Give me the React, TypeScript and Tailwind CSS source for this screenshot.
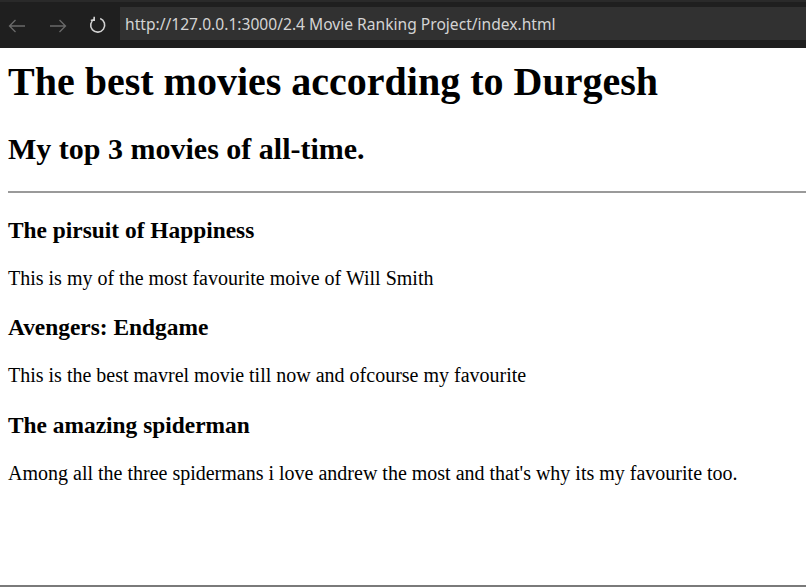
import React from "react";

export default function App() {
  return (
    <div className="w-[806px] h-[587px] flex flex-col bg-white overflow-hidden border-b-2 border-[#7a7a7a]">
      <div className="h-[48px] bg-[#1f1f1f] flex items-stretch shrink-0 border-t-2 border-[#2a2a2a]">
        <div className="flex items-center w-[120px] shrink-0">
          <svg width="18" height="14" viewBox="0 0 18 14" className="ml-[8px] mt-[1px]">
            <path d="M17 7H1.5M7.5 1L1.5 7l6 6" fill="none" stroke="#6a6a6a" strokeWidth="1.3" />
          </svg>
          <svg width="18" height="14" viewBox="0 0 18 14" className="ml-[23px] mt-[1px]">
            <path d="M1 7h15.5M10.5 1l6 6-6 6" fill="none" stroke="#6a6a6a" strokeWidth="1.3" />
          </svg>
          <svg width="18" height="18" viewBox="0 0 18 18" className="ml-[22px] mt-[-1px]">
            <path d="M11.2 2.6A7 7 0 1 1 5.5 2.9" fill="none" stroke="#d2d2d2" strokeWidth="1.6" />
            <path d="M5.2 0.8v3.4H1.8" fill="none" stroke="#d2d2d2" strokeWidth="1.6" />
          </svg>
        </div>
        <div className="flex-1 mt-[5px] mb-[8px] bg-[#313131] flex items-center pl-[5px]">
          <span className="text-[15.6px] text-[#d4d4d4] font-['Noto_Sans',sans-serif] leading-none whitespace-nowrap mt-[2px]">
            http://127.0.0.1:3000/2.4 Movie Ranking Project/index.html
          </span>
        </div>
      </div>
      <div className="flex-1 font-['Liberation_Serif',serif] text-black px-[8px] pt-[11px]">
        <h1 className="text-[40px] leading-[46px] font-bold">The best movies according to Durgesh</h1>
        <h2 className="text-[30px] leading-[35px] font-bold mt-[26px]">My top 3 movies of all-time.</h2>
        <hr className="mt-[25px] mr-[-8px] border-t-2 border-[#9a9a9a]" />
        <h3 className="text-[23.4px] leading-[27px] font-bold mt-[24px]">The pirsuit of Happiness</h3>
        <p className="text-[20px] leading-[23px] mt-[23px]">This is my of the most favourite moive of Will Smith</p>
        <h3 className="text-[23.4px] leading-[27px] font-bold mt-[24px]">Avengers: Endgame</h3>
        <p className="text-[20px] leading-[23px] mt-[23px]">This is the best mavrel movie till now and ofcourse my favourite</p>
        <h3 className="text-[23.4px] leading-[27px] font-bold mt-[25px]">The amazing spiderman</h3>
        <p className="text-[20px] leading-[23px] mt-[23px]">Among all the three spidermans i love andrew the most and that's why its my favourite too.</p>
      </div>
    </div>
  );
}
